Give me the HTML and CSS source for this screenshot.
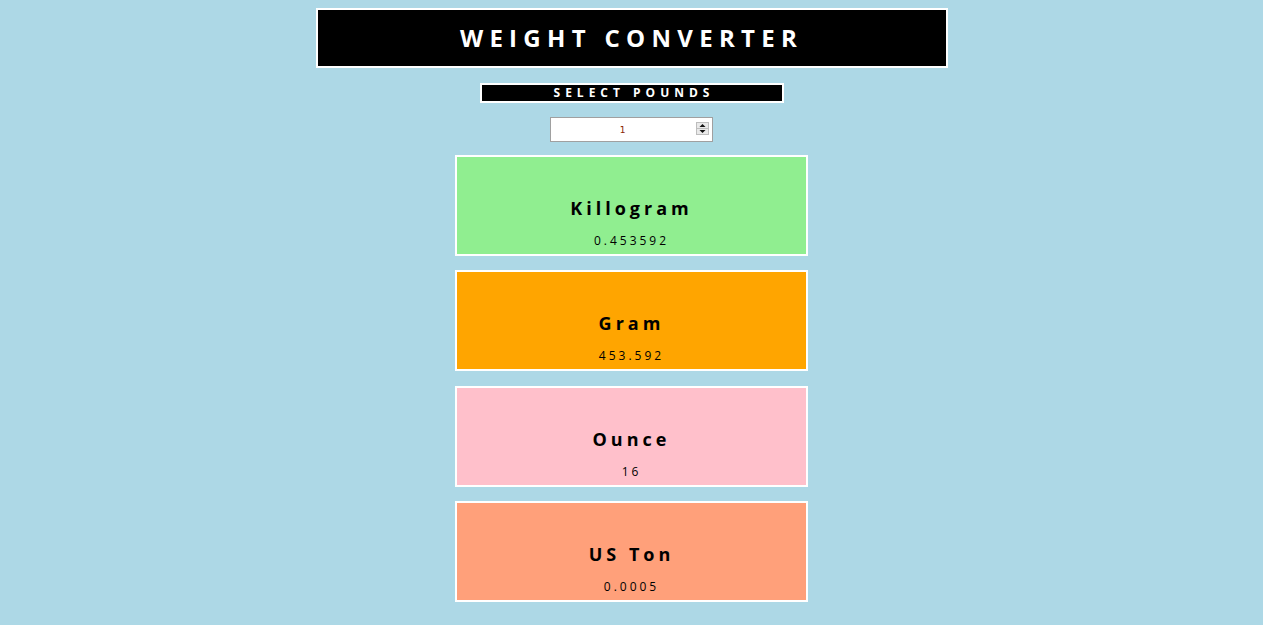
FILE: index.html
```html
<!DOCTYPE html>
<html lang="en">
<head>
<meta charset="utf-8">
<title>Weight Converter</title>
<link rel="stylesheet" href="styles.css">
</head>
<body>
<div class="page">
  <h1 class="title">WEIGHT CONVERTER</h1>
  <div class="select-label">SELECT POUNDS</div>
  <div class="input-wrap">
    <input class="pounds" type="text" value="1">
    <span class="spinner" aria-hidden="true">
      <svg width="13" height="13" viewBox="0 0 13 13">
        <rect x="0.5" y="0.5" width="12" height="12" fill="#e9e9e9" stroke="#bdbdbd"/>
        <line x1="1" y1="6.5" x2="12" y2="6.5" stroke="#bdbdbd"/>
        <path d="M3.5 5 L6.5 2 L9.5 5 Z" fill="#111"/>
        <path d="M3.5 8 L6.5 11 L9.5 8 Z" fill="#111"/>
      </svg>
    </span>
  </div>
  <div class="cards">
    <div class="card card-kg">
      <h2 class="unit">Killogram</h2>
      <div class="value">0.453592</div>
    </div>
    <div class="card card-g">
      <h2 class="unit">Gram</h2>
      <div class="value">453.592</div>
    </div>
    <div class="card card-oz">
      <h2 class="unit">Ounce</h2>
      <div class="value">16</div>
    </div>
    <div class="card card-ton">
      <h2 class="unit">US Ton</h2>
      <div class="value">0.0005</div>
    </div>
  </div>
</div>
</body>
</html>
```
FILE: styles.css
```css
html, body {
  margin: 0;
  padding: 0;
  background: #add8e6;
}
body {
  padding-top: 8px;
  font-family: "Open Sans", "DejaVu Sans", sans-serif;
}
.page {
  display: flex;
  flex-direction: column;
  align-items: center;
  gap: 15px;
}
.title {
  box-sizing: border-box;
  margin: 0;
  width: 632px;
  height: 60px;
  border: 2px solid #fff;
  background: #000;
  color: #fff;
  font-size: 24px;
  font-weight: 700;
  letter-spacing: 6.3px;
  line-height: 56px;
  text-align: center;
  padding-left: 0;
}
.select-label {
  box-sizing: border-box;
  width: 304px;
  height: 20px;
  margin-bottom: -1px;
  border: 2px solid #fff;
  background: #000;
  color: #fff;
  font-size: 12px;
  font-weight: 700;
  letter-spacing: 5px;
  line-height: 16px;
  text-align: center;
  padding-left: 5px;
}
.input-wrap {
  position: relative;
  width: 163px;
  height: 25px;
  margin-bottom: -2px;
}
.pounds {
  box-sizing: border-box;
  display: block;
  width: 163px;
  height: 25px;
  margin: 0;
  border: 1px solid #a0a0a0;
  background: #fff;
  font-family: "DejaVu Sans", sans-serif;
  font-size: 9px;
  color: #8b2500;
  text-align: center;
  padding: 0 20px 0 2px;
  outline: none;
}
.spinner {
  position: absolute;
  right: 4px;
  top: 5px;
  width: 13px;
  height: 13px;
  line-height: 0;
}
.cards {
  display: flex;
  flex-direction: column;
  gap: 14.4px;
}
.card {
  box-sizing: border-box;
  width: 353px;
  height: 101px;
  border: 2px solid #fff;
  padding-top: 40px;
  text-align: center;
}
.card-kg { background: #90ee90; }
.card-g { background: #ffa500; }
.card-oz { background: #ffc0cb; }
.card-ton { background: #ffa07a; }
.unit {
  margin: 0 0 15px;
  font-size: 18px;
  line-height: 22px;
  font-weight: 700;
  letter-spacing: 4px;
  color: #000;
}
.value {
  font-size: 12px;
  line-height: 14px;
  letter-spacing: 3px;
  color: #000;
}
```
